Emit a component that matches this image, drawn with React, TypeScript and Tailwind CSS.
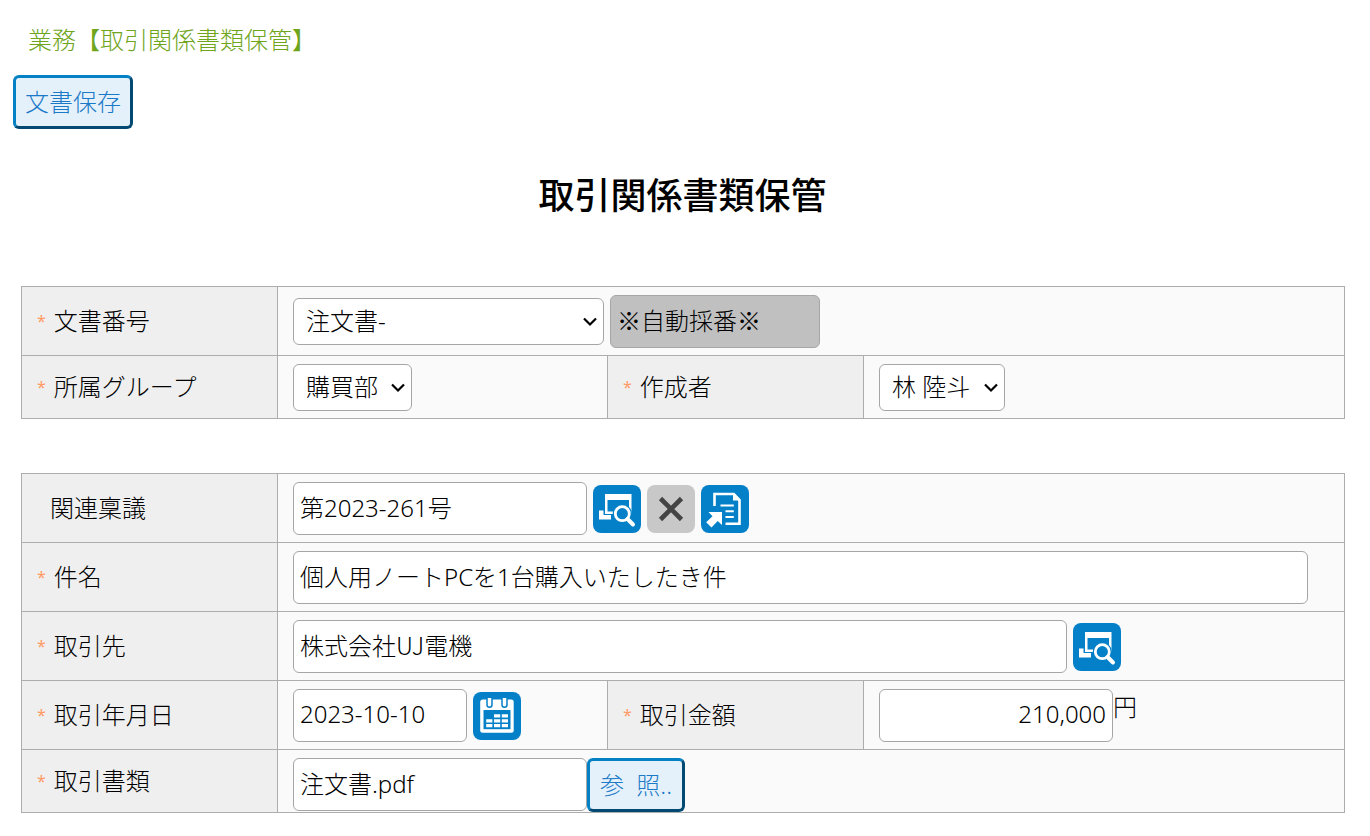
import type { ReactNode } from "react";

const field =
  "h-[53px] min-w-0 rounded-md border border-[#a6a6a6] bg-white px-1.5 pb-1 text-black outline-none";

const raised =
  "h-[54px] rounded-md border-3 border-t-[#0480c4] border-l-[#0480c4] border-r-[#034a73] border-b-[#034a73] bg-[#e5f1fa] text-[#1b7ac8]";

function Label({
  children,
  htmlFor,
  required = true,
}: {
  children: ReactNode;
  htmlFor: string;
  required?: boolean;
}) {
  return (
    <label
      htmlFor={htmlFor}
      className={`flex w-64 shrink-0 items-center gap-2 border-r border-[#adadad] bg-[#efefef] ${
        required ? "pl-[15px]" : "pl-7"
      }`}
    >
      {required && <span className="text-base font-normal text-[#ff9a66]">*</span>}
      <span>{children}</span>
    </label>
  );
}

function Row({ children }: { children: ReactNode }) {
  return <div className="flex border-b border-[#adadad]">{children}</div>;
}

function Cell({ children, className = "flex-1" }: { children: ReactNode; className?: string }) {
  return (
    <div className={`flex min-w-0 items-center gap-1.5 px-[15px] pt-2 pb-[7px] ${className}`}>
      {children}
    </div>
  );
}

function Select({ id, value, width }: { id: string; value: string; width: string }) {
  return (
    <div className={`relative ${width}`}>
      <select
        id={id}
        className="h-[47px] w-full appearance-none rounded-md border border-[#a6a6a6] bg-white pb-0.5 pl-3 text-black outline-none"
      >
        <option>{value}</option>
      </select>
      <svg
        viewBox="0 0 14 10"
        className="pointer-events-none absolute top-[19px] right-[7px] h-2.5 w-3.5"
        fill="none"
        stroke="#000"
        strokeWidth="2.2"
      >
        <path d="M1 1.5 7 7.5 13 1.5" />
      </svg>
    </div>
  );
}

function IconButton({
  label,
  color = "bg-[#0480c8]",
  children,
}: {
  label: string;
  color?: string;
  children: ReactNode;
}) {
  return (
    <button type="button" aria-label={label} className={`size-12 shrink-0 rounded-lg ${color}`}>
      <svg viewBox="0 0 48 48" className="size-12" fill="none">
        {children}
      </svg>
    </button>
  );
}

function SearchIcon() {
  return (
    <>
      <path d="M6 25.5h4.5v4.5H18v4.5H6z" fill="#fff" />
      <path d="M12 9h26.5v20H36V15H14.5v11.5H20V29h-8z" fill="#fff" />
      <circle cx="29.3" cy="28.7" r="9.6" fill="#0480c8" />
      <circle cx="29.3" cy="28.7" r="7" stroke="#fff" strokeWidth="2.8" />
      <path d="m34.5 34 5.5 5.5" stroke="#fff" strokeWidth="4" strokeLinecap="round" />
    </>
  );
}

function CloseIcon() {
  return <path d="m13.5 13.5 21 21m0-21-21 21" stroke="#444" strokeWidth="4.6" />;
}

function DocumentIcon() {
  return (
    <>
      <path d="M13.5 21V9h19.3l5.7 6v23.8H24.5" stroke="#fff" strokeWidth="2.6" />
      <path d="M32 9v6.5h6.5z" fill="#fff" />
      <path d="M19.5 20.5h13.3M24.5 26.3h8.3M24.5 32h8.3" stroke="#fff" strokeWidth="2" />
      <path d="M7.5 27H21v13l-4.3-4-6.2 6.5-5.3-5.2 6.3-6z" fill="#fff" />
    </>
  );
}

function CalendarIcon() {
  return (
    <>
      <rect x="7.2" y="7.5" width="33.5" height="33.3" rx="2.5" fill="#fff" />
      <path d="M10.5 18h27v19.2h-27z" fill="#0480c8" />
      <path
        d="M14 6v6.8a2.5 2.5 0 0 0 5 0V6M29 6v6.8a2.5 2.5 0 0 0 5 0V6"
        fill="#fff"
        stroke="#0480c8"
        strokeWidth="1.5"
      />
      <path
        d="M21 22.3h6.2v3.2H21zM28.8 22.3H35v3.2h-6.2zM13.2 27.2h6.2v3.2h-6.2zM21 27.2h6.2v3.2H21zM28.8 27.2H35v3.2h-6.2zM13.2 32.1h6.2v3.2h-6.2zM21 32.1h6.2v3.2H21zM28.8 32.1H35v3.2h-6.2z"
        fill="#fff"
      />
    </>
  );
}

export default function App() {
  return (
    <main className="min-h-screen bg-white pt-[22px] pr-[25px] pb-6 font-['Noto_Sans','Noto_Sans_CJK_JP',sans-serif] text-2xl leading-9 font-light text-black">
      <p className="pl-7 text-[#6fa51c]">業務【取引関係書類保管】</p>

      <button type="button" className={`mt-[17px] ml-[13px] block px-[9px] ${raised}`}>
        文書保存
      </button>

      <h1 className="mt-10 pl-5 text-center text-4xl leading-[54px] font-medium">
        取引関係書類保管
      </h1>

      <form className="mt-[63px] ml-[21px]">
        <section className="border-x border-t border-[#adadad] bg-[#fafafa]">
          <Row>
            <Label htmlFor="doc-type">文書番号</Label>
            <Cell>
              <Select id="doc-type" value="注文書-" width="w-[311px]" />
              <input
                aria-label="番号"
                readOnly
                defaultValue="※自動採番※"
                className="h-[53px] w-[210px] rounded-md border border-[#a6a6a6] bg-[#c0c0c0] px-1.5 pb-1 font-['Noto_Sans_CJK_JP',sans-serif] outline-none"
              />
            </Cell>
          </Row>
          <Row>
            <Label htmlFor="group">所属グループ</Label>
            <Cell className="w-[330px] shrink-0 border-r border-[#adadad]">
              <Select id="group" value="購買部" width="w-[119px]" />
            </Cell>
            <Label htmlFor="author">作成者</Label>
            <Cell>
              <Select id="author" value="林 陸斗" width="w-[126px]" />
            </Cell>
          </Row>
        </section>

        <section className="mt-[54px] border-x border-t border-[#adadad] bg-[#fafafa]">
          <Row>
            <Label htmlFor="approval" required={false}>
              関連稟議
            </Label>
            <Cell>
              <input id="approval" defaultValue="第2023-261号" className={`w-[294px] ${field}`} />
              <IconButton label="検索">
                <SearchIcon />
              </IconButton>
              <IconButton label="クリア" color="bg-[#c8c8c8]">
                <CloseIcon />
              </IconButton>
              <IconButton label="文書を開く">
                <DocumentIcon />
              </IconButton>
            </Cell>
          </Row>
          <Row>
            <Label htmlFor="subject">件名</Label>
            <Cell>
              <input
                id="subject"
                defaultValue="個人用ノートPCを1台購入いたしたき件"
                className={`w-[98%] ${field}`}
              />
            </Cell>
          </Row>
          <Row>
            <Label htmlFor="client">取引先</Label>
            <Cell>
              <input
                id="client"
                defaultValue="株式会社UJ電機"
                className={`w-[774px] font-['Noto_Sans_CJK_JP',sans-serif] ${field}`}
              />
              <IconButton label="検索">
                <SearchIcon />
              </IconButton>
            </Cell>
          </Row>
          <Row>
            <Label htmlFor="date">取引年月日</Label>
            <Cell className="w-[330px] shrink-0 border-r border-[#adadad]">
              <input id="date" defaultValue="2023-10-10" className={`w-[174px] ${field}`} />
              <IconButton label="カレンダー">
                <CalendarIcon />
              </IconButton>
            </Cell>
            <Label htmlFor="amount">取引金額</Label>
            <Cell>
              <div className="flex min-w-0 items-start">
                <input
                  id="amount"
                  defaultValue="210,000"
                  className={`w-[234px] text-right ${field}`}
                />
                <span>円</span>
              </div>
            </Cell>
          </Row>
          <Row>
            <Label htmlFor="file">取引書類</Label>
            <div className="flex min-w-0 flex-1 items-start pt-2 pl-[15px]">
              <input id="file" defaultValue="注文書.pdf" className={`w-[294px] ${field}`} />
              <button type="button" className={`w-[98px] shrink-0 whitespace-pre ${raised}`}>
                参  照..
              </button>
            </div>
          </Row>
        </section>
      </form>
    </main>
  );
}
